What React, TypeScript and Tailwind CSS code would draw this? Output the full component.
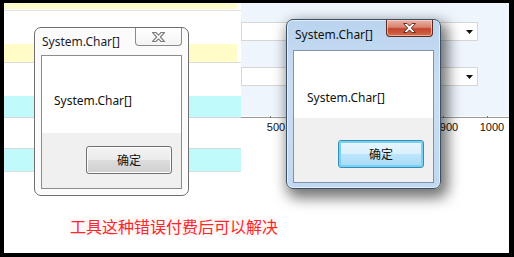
import React from 'react'

const ui = { fontFamily: '"Noto Sans", "Noto Sans CJK SC", sans-serif' }
const cjk = { fontFamily: '"Noto Sans CJK SC", "Noto Sans", sans-serif' }

function GridRows() {
    return (
        <div className="flex flex-col w-[237px] shrink-0">
            <div className="h-[6px] w-[233px] bg-[#fffccc]" />
            <div className="h-[1px]" />
            <div className="h-[1px] bg-[#e3e3e3]" />
            <div className="h-[33px]" />
            <div className="h-[18px] w-[233px] bg-[#fffcc8]" />
            <div className="h-[1px] bg-[#dcdcdc]" />
            <div className="h-[33px]" />
            <div className="h-[21px] bg-[#c0fafa]" />
            <div className="h-[1px] bg-[#d8d8d8]" />
            <div className="h-[30px]" />
            <div className="h-[1px] bg-[#d8d8d8]" />
            <div className="h-[22px] bg-[#c0fafa]" />
            <div className="h-[1px] bg-[#dcdcdc]" />
        </div>
    )
}

function Combo() {
    return (
        <div className="w-[237px] h-[19px] bg-white border border-[#d6d6d6] flex items-center justify-end pr-[4px]">
            <svg width="7" height="4" viewBox="0 0 7 4">
                <path d="M0 0h7L3.5 4z" fill="#111" />
            </svg>
        </div>
    )
}

function CloseGlyph({ fill, stroke, sw }: { fill: string; stroke: string; sw: number }) {
    return (
        <svg width="13" height="10" viewBox="0 0 13 10">
            <path d="M0.5 0.5h3.5l2.5 2.6 2.5-2.6h3.5l-4.2 4.5 4.2 4.5h-3.5l-2.5-2.6-2.5 2.6h-3.5l4.2-4.5z" fill={fill} stroke={stroke} strokeWidth={sw} strokeLinejoin="round" />
        </svg>
    )
}

function RightPanel() {
    return (
        <div className="flex flex-col flex-1">
            {/* Settings area */}
            <div className="h-[113px] bg-[#eef5fd] flex flex-col gap-[26px] pt-[19px]">
                <Combo />
                <Combo />
            </div>
            {/* Axis */}
            <svg width="268" height="20" style={{ fontFamily: '"Liberation Sans", sans-serif' }}>
                <line x1="0" y1="1.5" x2="268" y2="1.5" stroke="#9a9a9a" />
                <line x1="29.5" y1="0" x2="29.5" y2="2" stroke="#777" />
                <line x1="202.5" y1="0" x2="202.5" y2="2" stroke="#777" />
                <line x1="246.5" y1="0" x2="246.5" y2="2" stroke="#777" />
                <text x="35" y="15" fontSize="11" textAnchor="middle" fill="#111">500</text>
                <text x="208" y="15" fontSize="11" textAnchor="middle" fill="#111">900</text>
                <text x="251" y="15" fontSize="11" textAnchor="middle" fill="#111">1000</text>
            </svg>
        </div>
    )
}

function BasicDialog() {
    return (
        <div className="absolute left-[30px] top-[24px] w-[155px] h-[169px] rounded-[7px] border border-[#6e6e6e] bg-[#fbfbfb] shadow-[inset_0_0_0_1px_#ffffff]">
            <div className="flex h-[27px] items-start justify-between pl-[7px] pr-[6px]">
                <span className="text-[12px] text-[#1c1c2c] leading-none mt-[8px]" style={ui}>System.Char[]</span>
                <div className="w-[47px] h-[18px] border border-t-0 border-[#8a8a8a] rounded-b-[4px] bg-[linear-gradient(#ffffff,#f4f4f4)] flex items-center justify-center">
                    <CloseGlyph fill="#ffffff" stroke="#7e7e7e" sw={1.1} />
                </div>
            </div>
            <div className="ml-[6px] w-[141px] h-[134px] border border-[#8c8c8c] flex flex-col">
                <div className="h-[77px] bg-white pl-[12px] pt-[31px]">
                    <span className="text-[12px] text-[#111] leading-none" style={ui}>System.Char[]</span>
                </div>
                <div className="flex-1 bg-[#f0f0f0] flex justify-end pr-[9px] pt-[13px]">
                    <button className="w-[86px] h-[28px] rounded-[3px] border border-[#707070] bg-[linear-gradient(#f3f3f3,#ebebeb_50%,#dddddd_50%,#cfcfcf)] shadow-[inset_0_0_0_1px_#fcfcfc] text-[12px] text-[#111]" style={cjk}>
                        确定
                    </button>
                </div>
            </div>
        </div>
    )
}

function AeroDialog() {
    return (
        <div className="absolute left-[282px] top-[16px] w-[155px] h-[170px] rounded-[7px] border border-[#3d4f62] bg-[linear-gradient(#bad3ee,#cadff4_40%,#c0d8f1)] shadow-[4px_6px_14px_3px_rgba(0,0,0,0.55),inset_0_0_0_1px_#e4eefa]">
            <div className="flex h-[30px] items-start justify-between pl-[8px] pr-[7px]">
                <span className="text-[12px] text-[#111] leading-none mt-[9px]" style={ui}>System.Char[]</span>
                <div className="w-[47px] h-[17px] border border-t-0 border-[#5a2a24] rounded-b-[4px] bg-[linear-gradient(#eab3a8,#d8826f_45%,#c4442d_55%,#d36a4c)] flex items-center justify-center shadow-[inset_0_0_0_1px_rgba(255,220,210,0.6)]">
                    <CloseGlyph fill="#ffffff" stroke="#5e2219" sw={0.9} />
                </div>
            </div>
            <div className="ml-[6px] w-[141px] h-[133px] border border-[#7f93ad] flex flex-col">
                <div className="h-[67px] bg-white pl-[13px] pt-[33px]">
                    <span className="text-[12px] text-[#111] leading-none" style={ui}>System.Char[]</span>
                </div>
                <div className="flex-1 bg-[#f0f0f0] flex justify-end pr-[9px] pt-[22px]">
                    <button className="w-[86px] h-[28px] rounded-[3px] border border-[#3a8cb6] bg-[linear-gradient(#eaf6fd,#d9f0fc_50%,#bee6fd_50%,#a7d9f5)] shadow-[inset_0_0_0_2px_#74d2f2] text-[12px] text-[#111]" style={cjk}>
                        确定
                    </button>
                </div>
            </div>
        </div>
    )
}

export default function App() {
    return (
        <div className="w-[514px] h-[257px] bg-black pt-[3px] pl-[4px] pr-[5px] pb-[4px]">
            <div className="relative w-[505px] h-[250px] bg-white overflow-hidden flex items-start">
                <GridRows />
                <RightPanel />
                <BasicDialog />
                <AeroDialog />
                <p className="absolute left-[66px] top-[213px] text-[16px] leading-[20px] text-[#f52a2a] [text-shadow:-4px_0_6px_rgba(255,120,120,0.25)]" style={cjk}>
                    工具这种错误付费后可以解决
                </p>
            </div>
        </div>
    )
}
